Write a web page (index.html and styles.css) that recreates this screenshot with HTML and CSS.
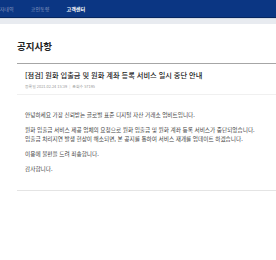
FILE: index.html
```html
<!DOCTYPE html>
<html lang="ko">
<head>
<meta charset="utf-8">
<link rel="stylesheet" href="styles.css">
</head>
<body>
<header class="top">
  <nav class="nav">
    <span class="nav-item">투자내역</span>
    <span class="nav-item">코인동향</span>
    <span class="nav-item active">고객센터</span>
  </nav>
</header>
<div class="strip"></div>
<main class="main">
  <h1 class="title">공지사항</h1>
  <article class="notice">
    <div class="notice-head">
      <h2 class="notice-title">[점검] 원화 입출금 및 원화 계좌 등록 서비스 일시 중단 안내</h2>
      <div class="meta">등록일 2021.02.24 15:39 <span class="sep">|</span> 조회수 57195</div>
    </div>
    <div class="notice-body">
      <p>안녕하세요 가장 신뢰받는 글로벌 표준 디지털 자산 거래소 업비트입니다.</p>
      <p>원화 입출금 서비스 제공 업체의 요청으로 원화 입출금 및 원화 계좌 등록 서비스가 중단되었습니다.<br>입출금 처리지연 발생 현상이 해소되면, 본 공지를 통하여 서비스 재개를 업데이트 하겠습니다.</p>
      <p>이용에 불편을 드려 죄송합니다.</p>
      <p>감사합니다.</p>
    </div>
  </article>
</main>
</body>
</html>
```
FILE: styles.css
```css
html, body {
  margin: 0;
  padding: 0;
  background: #fff;
}
body {
  font-family: "Noto Sans CJK KR", "Noto Sans", sans-serif;
  overflow: hidden;
}
.top {
  height: 17px;
  background: #0b3683;
  border-bottom: 1px solid #062660;
  display: flex;
  align-items: center;
}
.nav {
  display: flex;
  gap: 17px;
  margin-left: -5px;
}
.nav-item {
  font-size: 5.1px;
  line-height: 8px;
  color: #8798c0;
  white-space: nowrap;
}
.nav-item.active {
  color: #fff;
  font-weight: 700;
}
.strip {
  height: 5px;
  background: #e8ebf0;
  border-top: 1px solid #d6dbe4;
}
.main {
  padding-left: 17px;
}
.title {
  margin: 16px 0 11px;
  font-size: 9.5px;
  line-height: 12px;
  font-weight: 700;
  color: #222;
}
.notice {
  border-top: 1px solid #a6a6a6;
  border-bottom: 1px solid #e4e4e4;
}
.notice-head {
  padding: 6px 0 5px 8px;
  border-bottom: 1px solid #f0f0f0;
}
.notice-title {
  margin: 0;
  font-size: 7.2px;
  line-height: 10px;
  font-weight: 500;
  color: #222;
  white-space: nowrap;
}
.meta {
  margin-top: 3px;
  font-size: 3.9px;
  line-height: 6px;
  color: #9a9a9a;
  white-space: nowrap;
}
.sep {
  color: #ccc;
  margin: 0 1px;
}
.notice-body {
  padding: 14.5px 0 17px 8px;
}
.notice-body p {
  margin: 0 0 6.3px;
  font-size: 5.65px;
  line-height: 9px;
  color: #444;
  white-space: nowrap;
}
.notice-body p:last-child {
  margin-bottom: 0;
}
```
